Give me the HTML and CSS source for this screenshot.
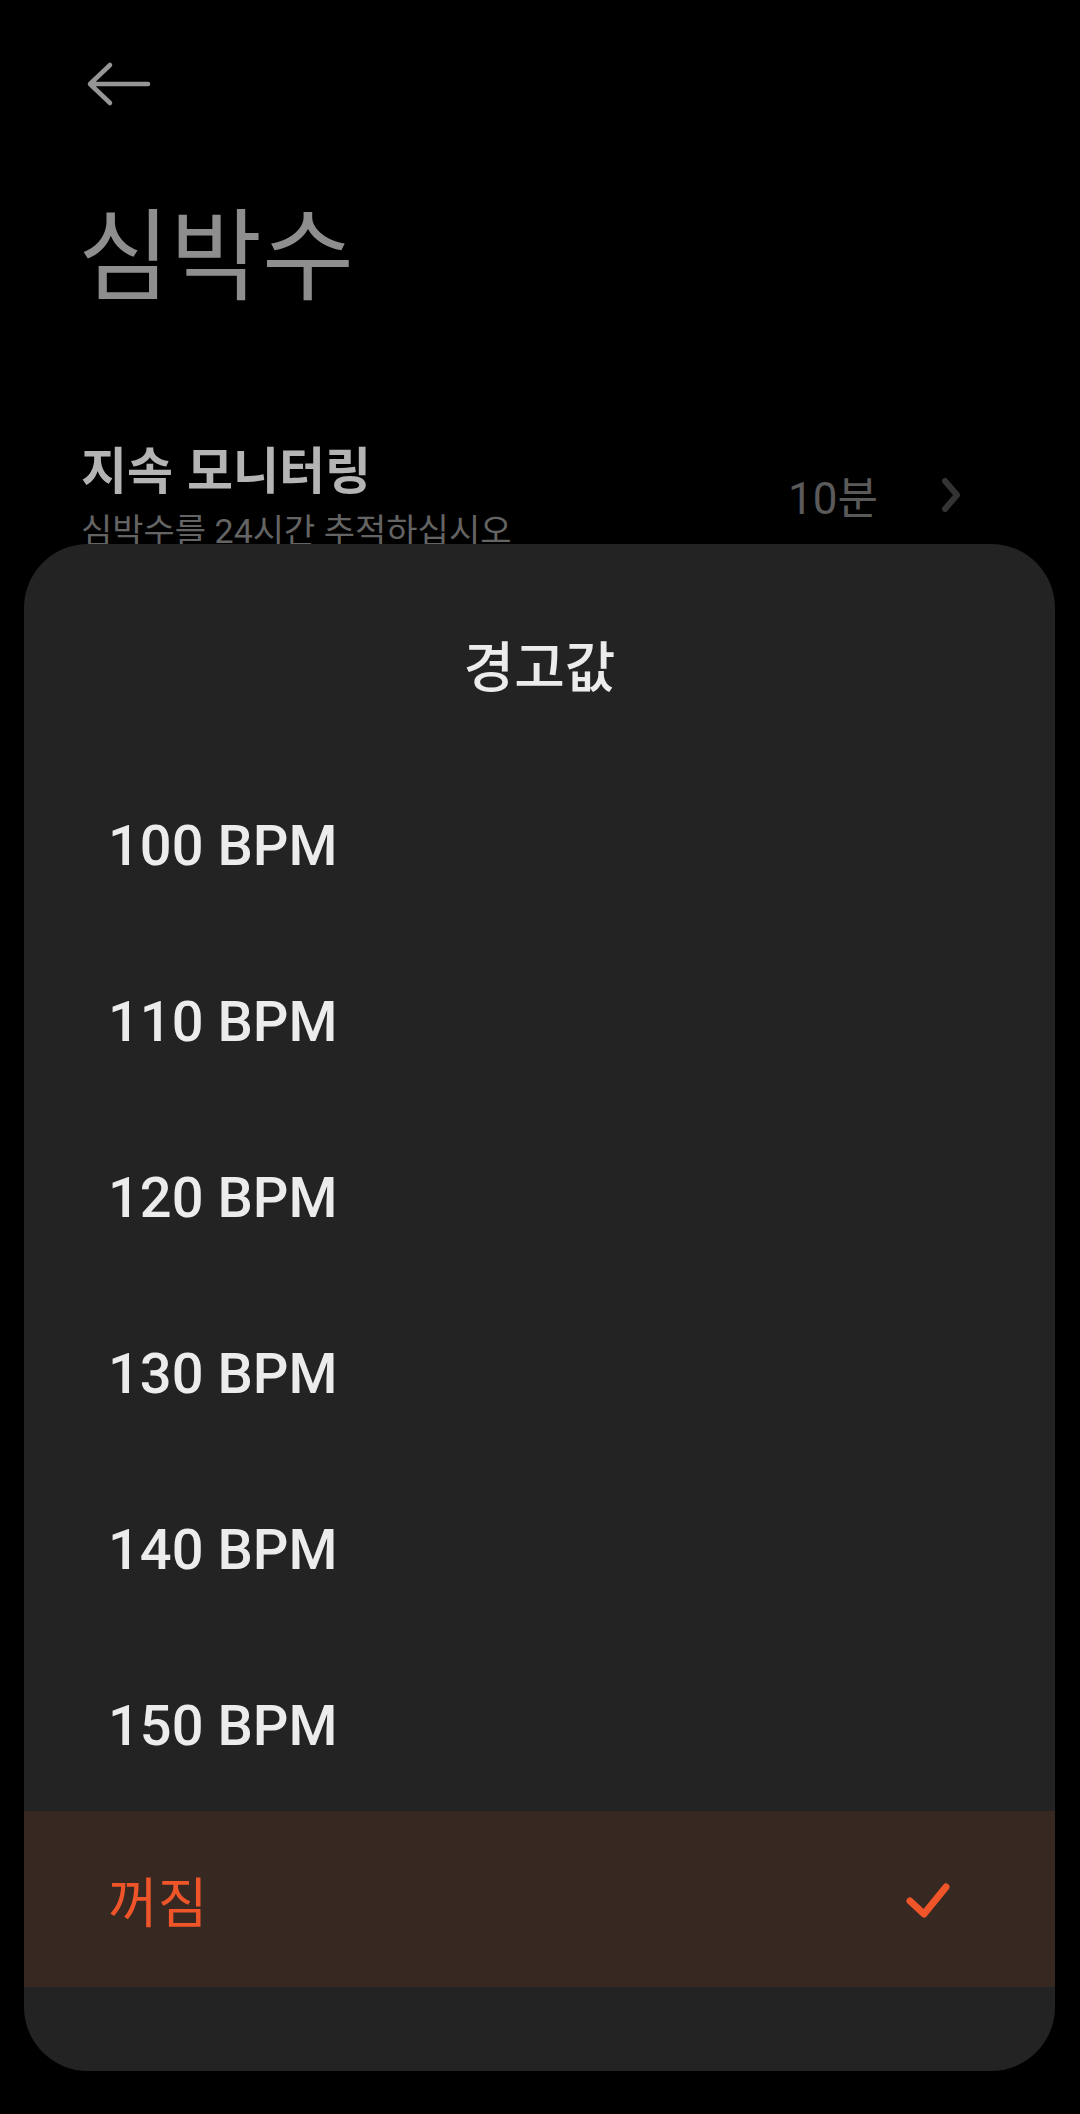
FILE: index.html
```html
<!DOCTYPE html>
<html lang="ko">
<head>
    <meta charset="UTF-8">
    <meta name="viewport" content="width=device-width, initial-scale=1.0">
    <title>심박수</title>
    <link rel="stylesheet" href="styles.css">
</head>
<body>
    <div class="screen">
        <header class="topbar">
            <button class="back-button" aria-label="뒤로">
                <svg width="80" height="56" viewBox="0 0 80 56">
                    <path d="M10 28 H68 M30 9 L10 28 L30 47" fill="none" stroke="#969696" stroke-width="4.5" stroke-linecap="round" stroke-linejoin="round"/>
                </svg>
            </button>
        </header>

        <h1 class="page-title">심박수</h1>

        <div class="setting">
            <div class="setting-text">
                <div class="setting-name">지속 모니터링</div>
                <div class="setting-desc">심박수를 24시간 추적하십시오</div>
            </div>
            <div class="setting-value">
                <span>10분</span>
                <svg width="24" height="36" viewBox="0 0 24 36">
                    <path d="M5 4 L17 18 L5 32" fill="none" stroke="#333" stroke-width="6" stroke-linecap="round" stroke-linejoin="round"/>
                </svg>
            </div>
        </div>

        <!-- bottom sheet picker -->
        <div class="sheet">
            <div class="sheet-title">경고값</div>
            <ul class="options">
                <li class="option">100 BPM</li>
                <li class="option">110 BPM</li>
                <li class="option">120 BPM</li>
                <li class="option">130 BPM</li>
                <li class="option">140 BPM</li>
                <li class="option">150 BPM</li>
                <li class="option selected">
                    <span>꺼짐</span>
                    <svg class="check" width="48" height="40" viewBox="0 0 48 40">
                        <path d="M6 22 L20 35 L42 8" fill="none" stroke="#f0552a" stroke-width="7" stroke-linecap="round" stroke-linejoin="round"/>
                    </svg>
                </li>
            </ul>
        </div>
    </div>
</body>
</html>
```

FILE: styles.css
```css
:root {
    --accent: #f0552a;
    --sheet-bg: #232323;
    --selected-bg: #372821;
}

body {
    margin: 0;
    padding: 0;
    background: #000;
    font-family: Roboto, "Noto Sans CJK KR", sans-serif;
    width: 1080px;
    height: 2114px;
    overflow: hidden;
}

.screen {
    position: relative;
    height: 100%;
}

.topbar {
    height: 168px;
    padding-top: 56px;
    box-sizing: border-box;
}

.back-button {
    background: none;
    border: none;
    padding: 0;
    margin-left: 80px;
    display: block;
}

.page-title {
    margin: 0;
    padding-left: 78px;
    font-family: "Noto Sans CJK KR", sans-serif;
    font-size: 100px;
    font-weight: 400;
    line-height: 1;
    color: #8e8e8e;
    margin-top: 31px;
}

.setting {
    display: flex;
    align-items: center;
    justify-content: space-between;
    padding: 0 116px 0 81px;
    margin-top: 138px;
}

.setting-name {
    font-family: "Noto Sans CJK KR", sans-serif;
    font-size: 50px;
    font-weight: 700;
    color: #b4b4b4;
    line-height: 1.2;
}

.setting-desc {
    font-family: Roboto, "Noto Sans CJK KR", sans-serif;
    font-size: 34px;
    color: #646464;
    line-height: 1.3;
    margin-top: 12px;
}

.setting-value {
    display: flex;
    align-items: center;
    gap: 62px;
    font-size: 44px;
    color: #5a5a5a;
}

.sheet {
    position: absolute;
    left: 24px;
    right: 25px;
    top: 544px;
    bottom: 43px;
    background: var(--sheet-bg);
    border-radius: 64px;
    overflow: hidden;
}

.sheet-title {
    height: 211px;
    box-sizing: border-box;
    padding-top: 92px;
    text-align: center;
    font-family: "Noto Sans CJK KR", sans-serif;
    font-size: 55px;
    font-weight: 500;
    line-height: 1;
    color: #ececec;
}

.options {
    list-style: none;
    margin: 0;
    padding: 0;
}

.option {
    height: 176px;
    box-sizing: border-box;
    padding: 5px 103px 0 84px;
    display: flex;
    align-items: center;
    justify-content: space-between;
    font-size: 56px;
    font-weight: 500;
    color: #ececec;
}

.option.selected {
    padding-top: 0;
    background: var(--selected-bg);
    color: var(--accent);
    font-weight: 400;
    font-size: 54px;
}
```
